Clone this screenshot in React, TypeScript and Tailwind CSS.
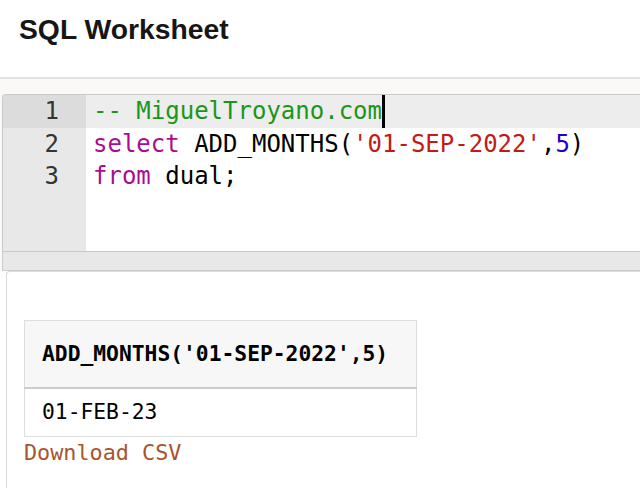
const mono = "font-['DejaVu_Sans_Mono','Liberation_Mono',monospace]";

const lines = [
  { n: 1, active: true },
  { n: 2, active: false },
  { n: 3, active: false },
];

function Editor() {
  return (
    <div className={`flex h-[158px] overflow-hidden rounded-tl-[4px] border-y border-l border-[#c9c9c9] ${mono} text-[24px] leading-[32.5px]`}>
      <div className="w-[83px] shrink-0 bg-[#e8e8e8] text-[#333]">
        {lines.map((l) => (
          <div key={l.n} className={`pr-[27px] text-right ${l.active ? 'bg-[#dcdcdc]' : ''}`}>
            {l.n}
          </div>
        ))}
      </div>
      <div className="flex-1 bg-white">
        <div className="flex items-start bg-[#ededed] pl-[7px] text-[#1a961a]">
          <span className="whitespace-pre">-- MiguelTroyano.com</span>
          <span className="inline-block h-[32.5px] w-[3px] bg-black" />
        </div>
        <div className="whitespace-pre pl-[7px] text-black">
          <span className="text-[#aa0d91]">select</span> ADD_MONTHS(
          <span className="text-[#c41a16]">'01-SEP-2022'</span>,
          <span className="text-[#1c00cf]">5</span>)
        </div>
        <div className="whitespace-pre pl-[7px] text-black">
          <span className="text-[#aa0d91]">from</span> dual;
        </div>
      </div>
    </div>
  );
}

function Results() {
  return (
    <div className="ml-[6px] h-[300px] rounded-tl-[4px] border-l border-t border-[#dcdcdc] bg-white pl-[17px] pt-[48px]">
      <table className={`w-[393px] border-collapse ${mono} text-[21.3px]`}>
        <thead>
          <tr className="bg-[#f7f7f7]">
            <th className="h-[67px] border border-b-2 border-[#dedede] border-b-[#cccccc] pl-[17px] text-left font-bold text-black">
              ADD_MONTHS('01-SEP-2022',5)
            </th>
          </tr>
        </thead>
        <tbody>
          <tr>
            <td className="h-[49px] border border-[#dedede] pl-[17px] text-black">01-FEB-23</td>
          </tr>
        </tbody>
      </table>
      <a href="#" className={`mt-[2px] block ${mono} text-[21.8px] leading-[28px] text-[#a9552e]`}>
        Download CSV
      </a>
    </div>
  );
}

export default function App() {
  return (
    <div className="h-[488px] w-[640px] overflow-hidden bg-white">
      <div className="h-[77px] px-[19px] pt-[15px]">
        <h1 className="font-['Liberation_Sans',Arial,sans-serif] text-[28.3px] font-bold leading-[28px] text-[#161616]">
          SQL Worksheet
        </h1>
      </div>
      <div className="h-[2px] bg-[#e2e2e2]" />
      <div className="bg-[#faf9f8] pl-[2px] pt-[15px]">
        <Editor />
        <div className="h-[19px] border-b border-l border-[#cbcbcb] bg-[#e8e8e8]" />
      </div>
      <Results />
    </div>
  );
}
